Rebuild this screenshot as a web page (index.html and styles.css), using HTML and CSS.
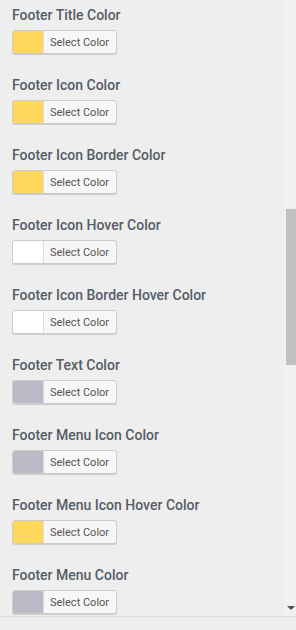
FILE: index.html
```html
<!DOCTYPE html>
<html>
<head>
<meta charset="utf-8">
<link rel="stylesheet" href="styles.css">
</head>
<body>
<div class="frame">
  <div class="panel">
    <div class="control"><div class="title">Footer Title Color</div><button class="color-btn"><span class="swatch yellow"></span><span class="label">Select Color</span></button></div>
    <div class="control"><div class="title">Footer Icon Color</div><button class="color-btn"><span class="swatch yellow"></span><span class="label">Select Color</span></button></div>
    <div class="control"><div class="title">Footer Icon Border Color</div><button class="color-btn"><span class="swatch yellow"></span><span class="label">Select Color</span></button></div>
    <div class="control"><div class="title">Footer Icon Hover Color</div><button class="color-btn"><span class="swatch white"></span><span class="label">Select Color</span></button></div>
    <div class="control"><div class="title">Footer Icon Border Hover Color</div><button class="color-btn"><span class="swatch white"></span><span class="label">Select Color</span></button></div>
    <div class="control"><div class="title">Footer Text Color</div><button class="color-btn"><span class="swatch grey"></span><span class="label">Select Color</span></button></div>
    <div class="control"><div class="title">Footer Menu Icon Color</div><button class="color-btn"><span class="swatch grey"></span><span class="label">Select Color</span></button></div>
    <div class="control"><div class="title">Footer Menu Icon Hover Color</div><button class="color-btn"><span class="swatch yellow"></span><span class="label">Select Color</span></button></div>
    <div class="control"><div class="title">Footer Menu Color</div><button class="color-btn"><span class="swatch grey"></span><span class="label">Select Color</span></button></div>
  </div>
  <div class="scrollbar">
    <div class="thumb"></div>
    <div class="arrow"></div>
  </div>
</div>
<div class="bottom"></div>
</body>
</html>
```
FILE: styles.css
```css
html, body {
  margin: 0;
  padding: 0;
  background: #eeeeee;
  font-family: Roboto, "Noto Sans", "Liberation Sans", sans-serif;
}
.frame {
  display: flex;
  height: 616px;
  overflow: hidden;
}
.panel {
  flex: 1;
  padding-left: 12px;
  overflow: hidden;
}
.control {
  height: 70px;
  padding-top: 5px;
  box-sizing: border-box;
}
.title {
  font-size: 14px;
  font-weight: 500;
  line-height: 20px;
  color: #555d66;
  margin-bottom: 5px;
  white-space: nowrap;
}
.color-btn {
  display: flex;
  align-items: stretch;
  height: 24px;
  padding: 0;
  margin: 0;
  border: 1px solid #cccccc;
  border-radius: 3px;
  box-shadow: 0 1px 0 #cccccc;
  background: #f7f7f7;
  overflow: hidden;
  cursor: pointer;
  font-family: inherit;
}
.swatch {
  width: 30px;
  border-right: 1px solid #dddddd;
}
.yellow { background: #ffd75b; }
.white { background: #ffffff; }
.grey { background: #bbbbc8; }
.label {
  display: flex;
  align-items: center;
  padding: 0 7px 0 6px;
  font-size: 11px;
  color: #555555;
  white-space: nowrap;
}
.scrollbar {
  width: 12px;
  background: #f1f1f1;
  display: flex;
  flex-direction: column;
  align-items: flex-end;
}
.thumb {
  width: 10px;
  height: 156px;
  margin-top: 209px;
  background: #c1c1c1;
}
.arrow {
  margin-top: auto;
  margin-bottom: 6px;
  margin-right: 1px;
  width: 0;
  height: 0;
  border-left: 4px solid transparent;
  border-right: 4px solid transparent;
  border-top: 4px solid #505050;
}
.bottom {
  height: 13px;
  border-top: 1px solid #dddddd;
  background: #eeeeee;
}
```
